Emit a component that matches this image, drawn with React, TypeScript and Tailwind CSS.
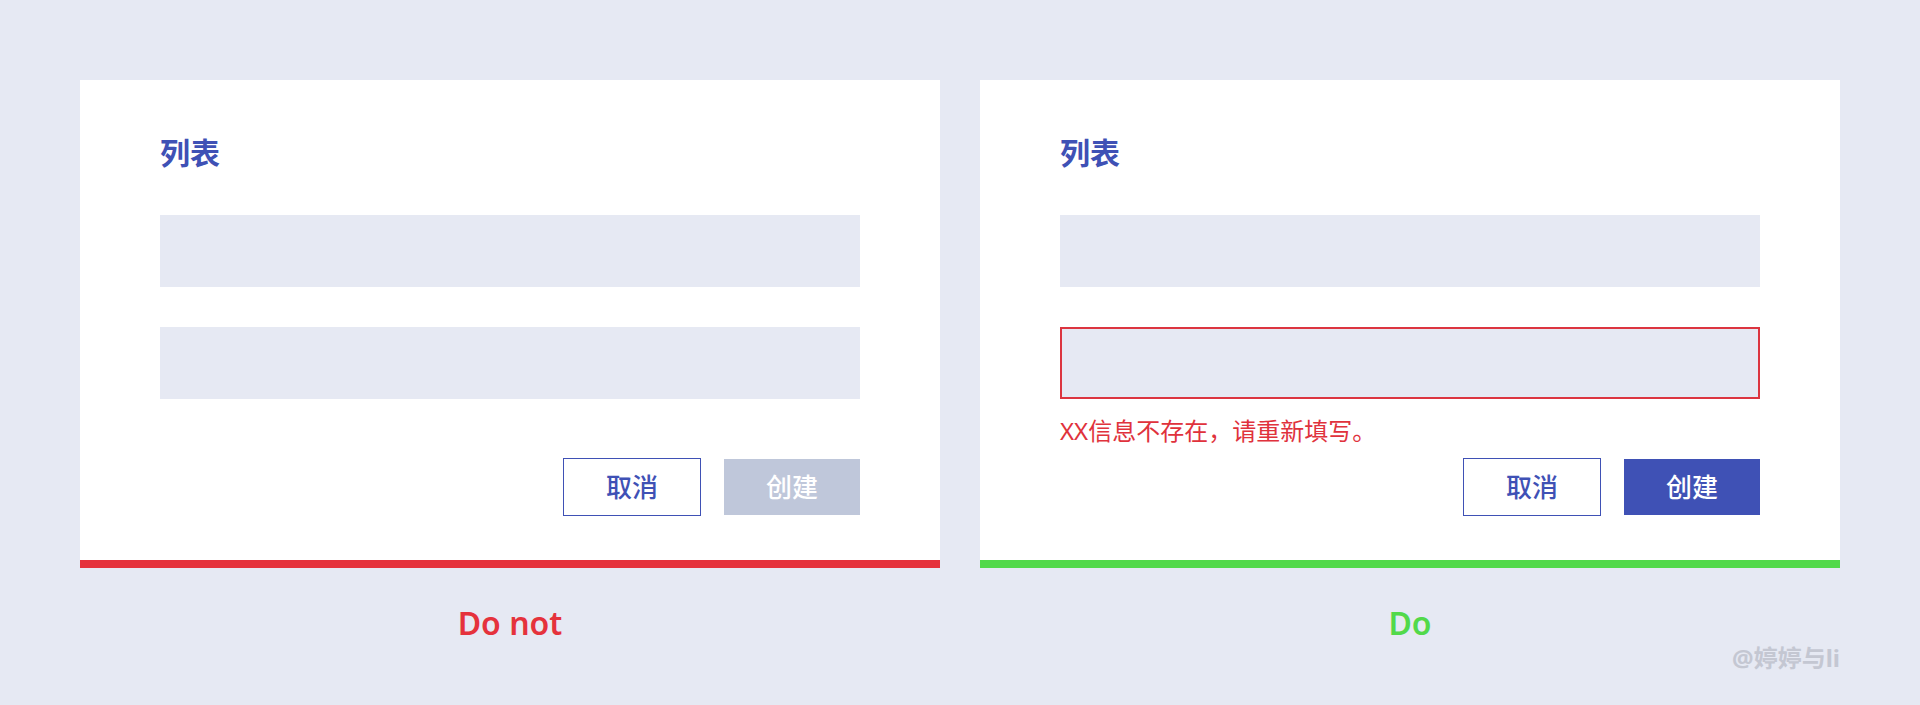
const font = { fontFamily: '"Noto Sans", "Noto Sans CJK SC", sans-serif' };

function FormCard({ error, bar, label, labelColor }: { error?: boolean; bar: string; label: string; labelColor: string }) {
  return (
    <div className="flex flex-col w-[860px]">
      <div className="bg-white px-20 pt-[57px] pb-[44px]">
        <h3 className="text-[30px] leading-[32px] font-bold text-[#3f51b5]">列表</h3>
        <div className="mt-[46px] h-[72px] bg-[#e6e9f3]" />
        <div
          className={
            error
              ? 'mt-[40px] h-[72px] bg-[#e6e9f3] border-2 border-[#dc3540]'
              : 'mt-[40px] h-[72px] bg-[#e6e9f3]'
          }
        />
        <div className="h-[59px]">
          {error && (
            <p className="pt-[19px] text-[24px] leading-[26px] text-[#e0323c]">XX信息不存在，请重新填写。</p>
          )}
        </div>
        <div className="flex justify-end items-center gap-[23px]">
          <button className="w-[138px] h-[58px] border border-[#3f51b5] bg-white text-[26px] font-medium text-[#3f51b5]">
            取消
          </button>
          <button
            className={
              error
                ? 'w-[136px] h-[56px] bg-[#3f51b5] text-[26px] font-medium text-white'
                : 'w-[136px] h-[56px] bg-[#bfc7da] text-[26px] font-medium text-white'
            }
          >
            创建
          </button>
        </div>
      </div>
      <div className={`h-2 ${bar}`} />
      <div className={`mt-[35px] text-center text-[32px] leading-[40px] font-semibold ${labelColor}`}>{label}</div>
    </div>
  );
}

export default function App() {
  return (
    <div className="w-full h-[705px] bg-[#e6e9f3] pt-20 px-20" style={font}>
      <div className="flex gap-10">
        <FormCard bar="bg-[#e5323c]" label="Do not" labelColor="text-[#e5323c]" />
        <FormCard error bar="bg-[#52d94a]" label="Do" labelColor="text-[#52d94a]" />
      </div>
      <div className="flex justify-end mt-[1px]">
        <span className="text-[24px] leading-[28px] font-bold text-[#c4c7d2]">@婷婷与li</span>
      </div>
    </div>
  );
}
